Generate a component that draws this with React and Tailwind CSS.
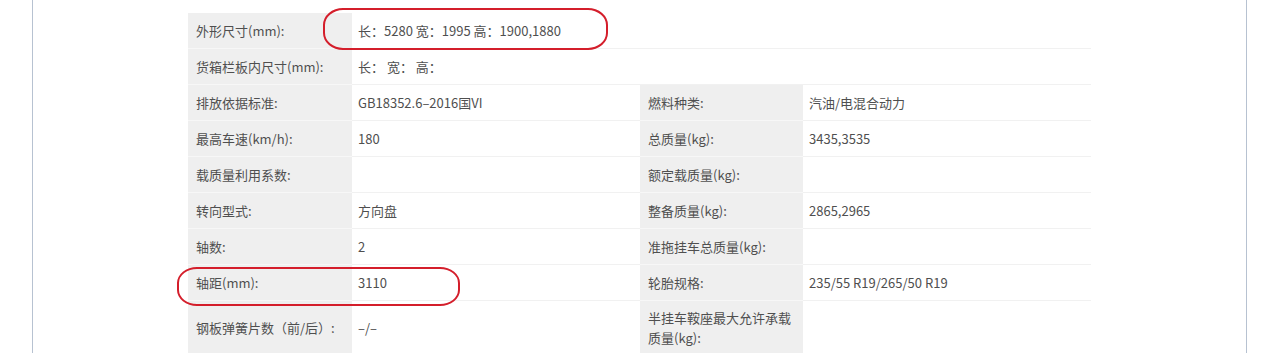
import React from 'react';

const rows = [
    { label: '外形尺寸(mm):', value: '长：5280 宽：1995 高：1900,1880', wide: true },
    { label: '货箱栏板内尺寸(mm):', value: '长：  宽：  高：', wide: true },
    { label: '排放依据标准:', value: 'GB18352.6–2016国VI', label2: '燃料种类:', value2: '汽油/电混合动力' },
    { label: '最高车速(km/h):', value: '180', label2: '总质量(kg):', value2: '3435,3535' },
    { label: '载质量利用系数:', value: '', label2: '额定载质量(kg):', value2: '' },
    { label: '转向型式:', value: '方向盘', label2: '整备质量(kg):', value2: '2865,2965' },
    { label: '轴数:', value: '2', label2: '准拖挂车总质量(kg):', value2: '' },
    { label: '轴距(mm):', value: '3110', label2: '轮胎规格:', value2: '235/55 R19/265/50 R19' },
    { label: '钢板弹簧片数（前/后）:', value: '–/–', label2: '半挂车鞍座最大允许承载质量(kg):', value2: '' },
];

const labelCls = 'min-h-[36px] bg-[#efefef] border-b border-[#f7f7f7] pl-2 pr-2 py-[7px] flex items-center';
const valueCls = 'min-h-[36px] bg-white border-b border-[#f1f1f1] pl-1.5 pr-2 py-[7px] flex items-center';

const App = () => {
    return (
        <div className="relative h-[353px] overflow-hidden bg-white" style={{ fontFamily: '"Noto Sans CJK SC", "Noto Sans", sans-serif' }}>
            <div className="mx-[32px] h-full border-x border-[#b7c2d1] pt-[13px]">
                <div className="mx-auto w-[903px] grid grid-cols-[164px_288px_163px_288px] border-r border-[#f0f0f0] text-[13px] leading-5 text-[#4f4f4f]">
                    {rows.map((r, i) => (
                        <React.Fragment key={i}>
                            <div className={labelCls}>{r.label}</div>
                            {r.wide ? (
                                <div className={valueCls + ' col-span-3'}>{r.value}</div>
                            ) : (
                                <>
                                    <div className={valueCls}>{r.value}</div>
                                    <div className={labelCls + ' pl-1.5'}>{r.label2}</div>
                                    <div className={valueCls}>{r.value2}</div>
                                </>
                            )}
                        </React.Fragment>
                    ))}
                </div>
            </div>

            {/* red annotation marks */}
            <div className="absolute left-[323px] top-[8px] w-[285px] h-[42px] border-[2.5px] border-[#d41e2b] rounded-[20px/17px]"></div>
            <div className="absolute left-[177px] top-[267px] w-[283px] h-[39px] border-[2.5px] border-[#d41e2b] rounded-[20px/16px]"></div>
        </div>
    );
};

export default App;
